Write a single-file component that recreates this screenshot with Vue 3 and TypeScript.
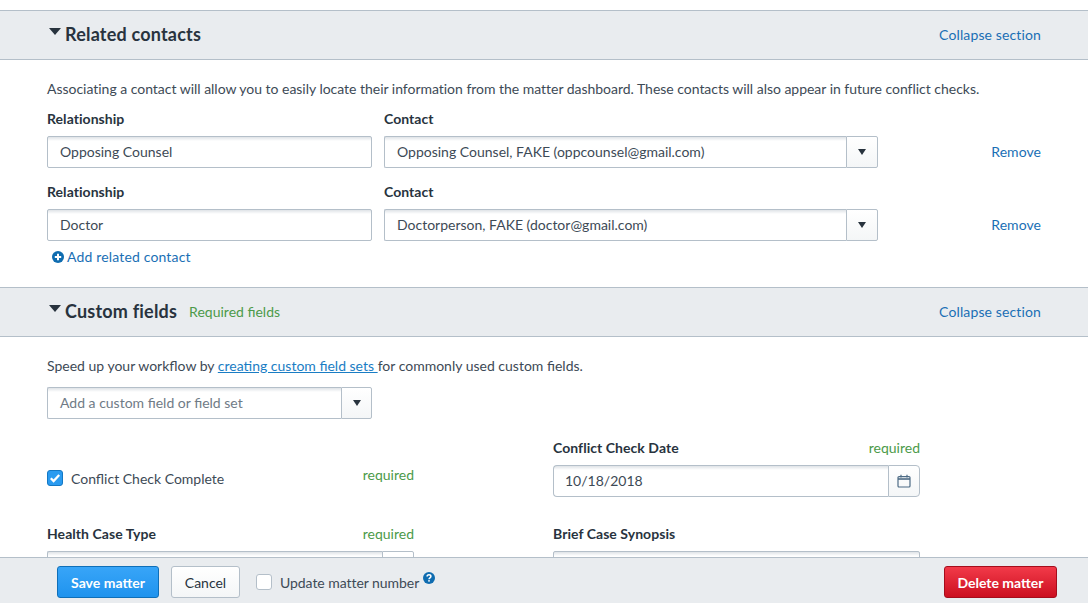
<script setup lang="ts">
interface Row { rel: string; contact: string }
const rows: Row[] = [
  { rel: 'Opposing Counsel', contact: 'Opposing Counsel, FAKE (oppcounsel@gmail.com)' },
  { rel: 'Doctor', contact: 'Doctorperson, FAKE (doctor@gmail.com)' },
]
</script>

<template>
  <div class="page">
    <div class="content">
      <header class="sec-head">
        <div class="sec-title"><span class="caret big"></span><h2>Related contacts</h2></div>
        <a class="link collapse">Collapse section</a>
      </header>
      <section class="related">
        <p class="intro">Associating a contact will allow you to easily locate their information from the matter dashboard. These contacts will also appear in future conflict checks.</p>
        <div v-for="r in rows" :key="r.rel" class="contact-row">
          <div class="col-rel">
            <label class="lbl">Relationship</label>
            <div class="input">{{ r.rel }}</div>
          </div>
          <div class="col-con">
            <label class="lbl">Contact</label>
            <div class="select">
              <div class="input joined">{{ r.contact }}</div>
              <div class="addon"><span class="caret"></span></div>
            </div>
          </div>
          <a class="link remove">Remove</a>
        </div>
        <a class="link add">
          <svg width="12" height="12" viewBox="0 0 12 12"><circle cx="6" cy="6" r="6" fill="#0f6cb0"/><path d="M6 2.8v6.4M2.8 6h6.4" stroke="#fff" stroke-width="2"/></svg>
          Add related contact
        </a>
      </section>

      <header class="sec-head">
        <div class="sec-title"><span class="caret big"></span><h2>Custom fields</h2><span class="req-head">Required fields</span></div>
        <a class="link collapse">Collapse section</a>
      </header>
      <section class="custom">
        <p class="speed">Speed up your workflow by <a class="ulink">creating custom field sets </a>for commonly used custom fields.</p>
        <div class="select add-field">
          <div class="input joined placeholder">Add a custom field or field set</div>
          <div class="addon small"><span class="caret"></span></div>
        </div>
        <div class="fields">
          <div class="field check-field">
            <div class="check-line">
              <span class="box on">
                <svg width="12" height="10" viewBox="0 0 12 10"><path d="M1.8 5.2 4.6 8l5.6-6" fill="none" stroke="#fff" stroke-width="2.3"/></svg>
              </span>
              <span class="check-text">Conflict Check Complete</span>
            </div>
            <span class="req req-check">required</span>
          </div>
          <div class="field">
            <div class="label-line"><label class="lbl">Conflict Check Date</label><span class="req">required</span></div>
            <div class="select">
              <div class="input joined date">10/18/2018</div>
              <div class="addon date-addon">
                <svg width="14" height="14" viewBox="0 0 14 14" fill="none" stroke="#4d6b85" stroke-width="1.2"><rect x="1" y="2.6" width="12" height="10.4" rx="1"/><path d="M1 5h12" stroke-width="1.6"/><path d="M4 .8v2.6M10 .8v2.6"/></svg>
              </div>
            </div>
          </div>
          <div class="field">
            <div class="label-line"><label class="lbl">Health Case Type</label><span class="req">required</span></div>
            <div class="select">
              <div class="input joined"></div>
              <div class="addon health"></div>
            </div>
          </div>
          <div class="field">
            <div class="label-line"><label class="lbl">Brief Case Synopsis</label></div>
            <div class="input"></div>
          </div>
        </div>
      </section>
    </div>

    <footer class="footer">
      <button class="btn primary">Save matter</button>
      <button class="btn cancel">Cancel</button>
      <span class="box"></span>
      <span class="update">Update matter number</span>
      <svg class="help" width="12" height="12" viewBox="0 0 12 12"><circle cx="6" cy="6" r="6" fill="#0f6cb0"/><path d="M4.1 4.6c0-1.2.9-1.8 1.9-1.8s1.9.6 1.9 1.6c0 1.4-1.9 1.4-1.9 2.8" fill="none" stroke="#fff" stroke-width="1.5"/><rect x="5.2" y="8.1" width="1.6" height="1.5" fill="#fff"/></svg>
      <button class="btn danger">Delete matter</button>
    </footer>
  </div>
</template>

<style>
html, body { margin: 0; padding: 0; overflow: hidden; }
</style>

<style scoped>
.page {
  position: relative;
  width: 1088px;
  height: 603px;
  overflow: hidden;
  background: #fff;
  font-family: Lato, "Open Sans", sans-serif;
  font-size: 14px;
  color: #3d4a56;
}
.content { padding-top: 10px; }
.sec-head {
  height: 48px;
  box-sizing: content-box;
  display: flex;
  align-items: center;
  justify-content: space-between;
  padding: 0 47px 0 49px;
  background: #e9ecef;
  border-top: 1px solid #b4bfc9;
  border-bottom: 1px solid #b4bfc9;
}
.sec-title { display: flex; align-items: center; margin-top: -3px; }
.sec-title h2 {
  margin: 0;
  font-size: 18px;
  letter-spacing: 0.2px;
  font-weight: 700;
  color: #28333e;
}
.caret {
  display: inline-block;
  width: 0;
  height: 0;
  border-left: 4.5px solid transparent;
  border-right: 4.5px solid transparent;
  border-top: 6px solid #28333e;
}
.caret.big {
  border-left-width: 6px;
  border-right-width: 6px;
  border-top-width: 7px;
  margin-right: 4px;
  margin-top: -4px;
}
.req-head { margin-left: 12px; color: #4c9a4a; font-size: 14px; margin-top: 2px; }
.link { color: #1a6fb5; font-size: 14px; cursor: pointer; }
.collapse { letter-spacing: 0.13px; margin-top: -2px; }
.related { padding: 20px 47px 0; height: 227px; box-sizing: border-box; }
.intro { margin: 0 0 12px; line-height: 18px; letter-spacing: -0.024px; }
.contact-row { display: flex; align-items: flex-end; margin-bottom: 15px; }
.col-rel { width: 325px; margin-right: 12px; }
.col-con { width: 494px; }
.lbl {
  display: block;
  font-weight: 700;
  color: #28333e;
  font-size: 14px;
  letter-spacing: 0.05px;
  line-height: 18px;
  margin-bottom: 8px;
}
.input {
  box-sizing: border-box;
  height: 32px;
  line-height: 30px;
  padding: 0 12px;
  border: 1px solid #b4bfc9;
  border-radius: 2px;
  background: linear-gradient(#dfe3e7 0, #fff 4px);
  color: #3d4a56;
}
.select { display: flex; }
.joined { flex: 1; border-right: 0; border-radius: 2px 0 0 2px; }
.addon {
  box-sizing: border-box;
  width: 32px;
  height: 32px;
  display: flex;
  align-items: center;
  justify-content: center;
  border: 1px solid #b4bfc9;
  border-radius: 0 2px 2px 0;
  background: linear-gradient(#fff, #f4f6f7);
}
.addon.small { width: 31px; }
.remove { margin-left: auto; line-height: 32px; letter-spacing: 0.05px; }
.add {
  display: flex;
  align-items: center;
  gap: 3px;
  margin: -8px 0 0 5px;
  line-height: 18px;
  letter-spacing: 0.16px;
}
.custom { padding: 20px 47px 0; }
.speed { margin: 0 0 12px; line-height: 18px; }
.ulink { color: #1a7dc4; text-decoration: underline; }
.add-field { width: 325px; }
.placeholder { color: #6f7b86; }
.fields {
  display: grid;
  grid-template-columns: 367px 367px;
  column-gap: 139px;
  grid-template-rows: 86px 86px;
  margin-top: 20px;
}
.field { position: relative; }
.label-line {
  display: flex;
  justify-content: space-between;
  line-height: 18px;
}
.req { color: #4c9a4a; font-size: 14px; line-height: 18px; }
.check-field { display: flex; justify-content: space-between; }
.check-line { display: flex; align-items: center; gap: 8px; height: 18px; margin-top: 30px; }
.req-check { margin-top: 27px; }
.box {
  box-sizing: border-box;
  display: inline-flex;
  align-items: center;
  justify-content: center;
  width: 16px;
  height: 16px;
  border: 1px solid #b4bfc9;
  border-radius: 3px;
  background: #fff;
}
.box.on { background: #2a9bf0; border-color: #1478c4; }
.check-text { color: #3d4a56; }
.date-addon svg { display: block; }
.date { border-radius: 4px 0 0 4px; padding-left: 11px; }
.date-addon { border-radius: 0 4px 4px 0; }
.health { background: #fff; }
.footer {
  position: absolute;
  left: 0;
  right: 0;
  bottom: 0;
  height: 42px;
  display: flex;
  align-items: center;
  box-sizing: content-box;
  padding: 3px 31px 0 57px;
  background: #e9ecef;
  border-top: 1px solid #b4bfc9;
}
.btn {
  box-sizing: border-box;
  height: 32px;
  border-radius: 3px;
  font-family: inherit;
  font-size: 14px;
  padding: 0;
}
.primary {
  width: 102px;
  font-weight: 700;
  color: #fff;
  background: linear-gradient(#38a5f8, #1f93ee);
  border: 1px solid #0f6fb8;
}
.cancel {
  width: 69px;
  margin: 0 16px 0 12px;
  color: #28333e;
  background: linear-gradient(#fff, #f4f6f7);
  border: 1px solid #b4bfc9;
}
.update { margin-left: 8px; color: #3d4a56; letter-spacing: -0.05px; }
.help { margin: -8px 0 0 4px; }
.danger {
  margin-left: auto;
  width: 113px;
  font-weight: 700;
  color: #fff;
  background: linear-gradient(#f23a49, #cc0f20);
  border: 1px solid #a50d1c;
}
</style>
